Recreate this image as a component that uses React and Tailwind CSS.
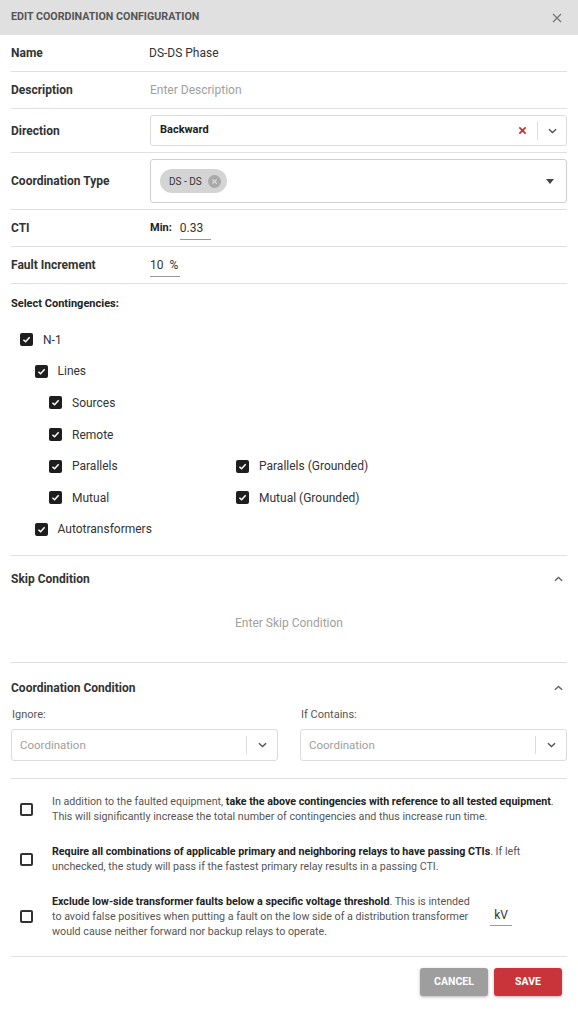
import React from 'react';

const Check = ({ checked = true }) =>
  checked ? (
    <span className="w-[13px] h-[13px] rounded-[2px] bg-[#1e1e1e] flex items-center justify-center shrink-0">
      <svg width="9" height="9" viewBox="0 0 10 10">
        <path d="M1.6 5.2 L4 7.5 L8.5 2.6" fill="none" stroke="#fff" strokeWidth="1.7" />
      </svg>
    </span>
  ) : (
    <span className="w-[13px] h-[13px] rounded-[2px] border-2 border-[#333] shrink-0" />
  );

const Chevron = ({ up = false, color = '#666' }) => (
  <svg width="9" height="6" viewBox="0 0 10 6">
    <path d={up ? 'M1 5 L5 1.2 L9 5' : 'M1 1 L5 4.8 L9 1'} fill="none" stroke={color} strokeWidth="1.6" />
  </svg>
);

const Contingency = ({ level = 0, label, right }) => (
  <div className="h-[31.6px] flex items-center">
    <div className="flex items-center w-[225px]" style={{ paddingLeft: 9 + level * 14.5 }}>
      <Check />
      <span className="ml-[10px] text-[12px] text-[#333]">{label}</span>
    </div>
    {right && (
      <div className="flex items-center">
        <Check />
        <span className="ml-[10px] text-[12px] text-[#333]">{right}</span>
      </div>
    )}
  </div>
);

const Row = ({ label, className = 'h-[37px]', children }) => (
  <div className={`flex items-center border-b border-[#e0e0e0] ${className}`}>
    <div className="w-[139px] text-[12px] font-bold text-[#333]">{label}</div>
    <div className="flex-1 flex items-center">{children}</div>
  </div>
);

const SmallSelect = () => (
  <div className="h-[32px] flex-1 border border-[#dcdcdc] rounded-[3px] flex items-center pl-[8px]">
    <span className="flex-1 text-[11.5px] text-[#9e9e9e]">Coordination</span>
    <span className="w-px h-[18px] bg-[#ddd]" />
    <span className="w-[30px] flex justify-center"><Chevron color="#555" /></span>
  </div>
);

export default function App() {
  return (
    <div className="w-[578px] bg-white font-['Roboto','Liberation_Sans',sans-serif] text-[#333]">
      <div className="h-[35px] bg-[#e0e0e0] px-[11px] flex items-center justify-between">
        <span className="text-[10.7px] font-bold text-[#555] uppercase">Edit Coordination Configuration</span>
        <svg width="10" height="10" viewBox="0 0 10 10" className="mr-[5px]">
          <path d="M1 1 L9 9 M9 1 L1 9" stroke="#777" strokeWidth="1.3" />
        </svg>
      </div>

      <div className="px-[11px]">
        <Row label="Name">
          <span className="text-[12px] text-[#333] -ml-[1px]">DS-DS Phase</span>
        </Row>
        <Row label="Description">
          <span className="text-[12px] text-[#a0a0a0]">Enter Description</span>
        </Row>
        <Row label="Direction" className="py-[6px]">
          <div className="h-[31px] flex-1 border border-[#dcdcdc] rounded-[3px] flex items-center pl-[9px]">
            <span className="flex-1 text-[11px] font-bold text-[#222]">Backward</span>
            <svg width="9" height="9" viewBox="0 0 10 10" className="mr-[10px]">
              <path d="M1.5 1.5 L8.5 8.5 M8.5 1.5 L1.5 8.5" stroke="#d32f2f" strokeWidth="2" />
            </svg>
            <span className="w-px h-[18px] bg-[#ddd]" />
            <span className="w-[28px] flex justify-center"><Chevron color="#555" /></span>
          </div>
        </Row>
        <Row label="Coordination Type" className="py-[6px]">
          <div className="h-[44px] flex-1 border border-[#cfcfcf] rounded-[3px] flex items-center pl-[9px] pr-[12px]">
            <div className="flex-1 flex">
              <span className="h-[24px] w-[67px] rounded-full bg-[#d4d4d4] flex items-center pl-[9px] gap-[6px]">
                <span className="text-[10px] text-[#333]">DS - DS</span>
                <span className="w-[13px] h-[13px] rounded-full bg-[#a9a9a9] flex items-center justify-center">
                  <svg width="7" height="7" viewBox="0 0 8 8">
                    <path d="M1.5 1.5 L6.5 6.5 M6.5 1.5 L1.5 6.5" stroke="#e0e0e0" strokeWidth="1.4" />
                  </svg>
                </span>
              </span>
            </div>
            <svg width="8" height="5" viewBox="0 0 8 5"><path d="M0 0 H8 L4 5 Z" fill="#444" /></svg>
          </div>
        </Row>
        <Row label="CTI">
          <span className="text-[11px] font-bold text-[#222] mr-[8px]">Min:</span>
          <span className="w-[31px] border-b border-[#999] text-[12px] text-[#333] pb-[2px] pt-[2px]">0.33</span>
        </Row>
        <Row label="Fault Increment">
          <span className="w-[30px] border-b border-[#999] text-[12px] text-[#333] pb-[2px] pt-[2px]">
            10 <span className="ml-[3px]">%</span>
          </span>
        </Row>

        <div className="border-b border-[#e0e0e0] pb-[10px]">
          <div className="pt-[14px] text-[11px] leading-[12px] font-bold text-[#222]">Select Contingencies:</div>
          <div className="mt-[14px]">
            <Contingency level={0} label="N-1" />
            <Contingency level={1} label="Lines" />
            <Contingency level={2} label="Sources" />
            <Contingency level={2} label="Remote" />
            <Contingency level={2} label="Parallels" right="Parallels (Grounded)" />
            <Contingency level={2} label="Mutual" right="Mutual (Grounded)" />
            <Contingency level={1} label="Autotransformers" />
          </div>
        </div>

        <div className="border-b border-[#e0e0e0] pb-[18px]">
          <div className="h-[46px] flex items-center justify-between">
            <span className="text-[12px] font-bold text-[#333]">Skip Condition</span>
            <span className="mr-[4px]"><Chevron up /></span>
          </div>
          <div className="h-[42px] flex items-center justify-center text-[12px] text-[#a0a0a0]">Enter Skip Condition</div>
        </div>

        <div className="border-b border-[#e0e0e0] pb-[17px]">
          <div className="pt-[18px] h-[32px] flex items-center justify-between">
            <span className="text-[12px] font-bold text-[#333]">Coordination Condition</span>
            <span className="mr-[4px]"><Chevron up /></span>
          </div>
          <div className="mt-[12px] grid grid-cols-2 gap-x-[22px]">
            <div>
              <div className="h-[14px] text-[11px] text-[#555] ml-[1px]">Ignore:</div>
              <div className="mt-[8px] flex"><SmallSelect /></div>
            </div>
            <div>
              <div className="h-[14px] text-[11px] text-[#555] ml-[1px]">If Contains:</div>
              <div className="mt-[8px] flex"><SmallSelect /></div>
            </div>
          </div>
        </div>

        <div className="border-b border-[#e0e0e0] pt-[15px] pb-[17px] flex flex-col gap-[20px] text-[10.7px] leading-[15px] text-[#555]">
          <div className="flex items-center">
            <span className="ml-[9px] mr-[19px] flex"><Check checked={false} /></span>
            <p className="flex-1">
              In addition to the faulted equipment, <b className="text-[#222]">take the above contingencies with reference to all tested equipment</b>. This will significantly increase the total number of contingencies and thus increase run time.
            </p>
          </div>
          <div className="flex items-center">
            <span className="ml-[9px] mr-[19px] flex"><Check checked={false} /></span>
            <p className="flex-1 pr-[20px]">
              <b className="text-[#222]">Require all combinations of applicable primary and neighboring relays to have passing CTIs</b>. If left unchecked, the study will pass if the fastest primary relay results in a passing CTI.
            </p>
          </div>
          <div className="flex items-center">
            <span className="ml-[9px] mr-[19px] flex"><Check checked={false} /></span>
            <p className="w-[422px]">
              <b className="text-[#222]">Exclude low-side transformer faults below a specific voltage threshold</b>. This is intended to avoid false positives when putting a fault on the low side of a distribution transformer would cause neither forward nor backup relays to operate.
            </p>
            <span className="ml-[16px] w-[22px] border-b border-[#999] text-center text-[12px] text-[#333] pb-[2px]">kV</span>
          </div>
        </div>

        <div className="pt-[11px] pb-[22px] pr-[5px] flex justify-end gap-[6px]">
          <button className="w-[68px] h-[28px] rounded-[3px] bg-[#9e9e9e] text-white text-[10.5px] font-bold uppercase shadow-[0_1px_3px_rgba(0,0,0,0.3)]">Cancel</button>
          <button className="w-[68px] h-[28px] rounded-[3px] bg-[#c8343a] text-white text-[10.5px] font-bold uppercase shadow-[0_1px_3px_rgba(0,0,0,0.3)]">Save</button>
        </div>
      </div>
    </div>
  );
}
